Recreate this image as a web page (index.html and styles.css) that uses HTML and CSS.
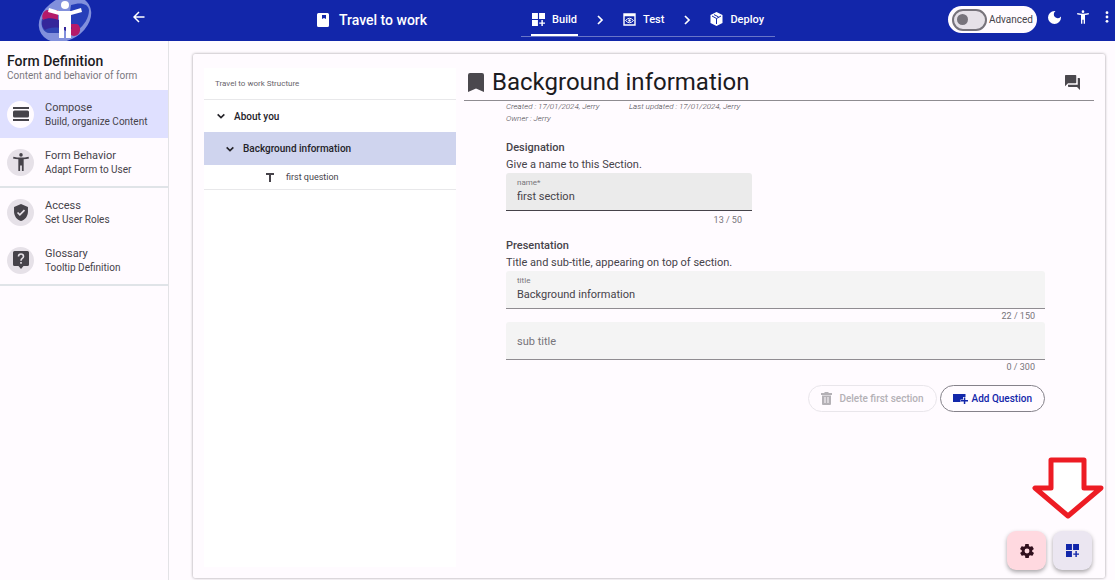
FILE: index.html
```html
<!DOCTYPE html>
<html lang="en">
<head>
<meta charset="utf-8">
<meta name="viewport" content="width=device-width, initial-scale=1">
<title>Travel to work</title>
<link rel="stylesheet" href="styles.css">
</head>
<body>
<svg class="symbols" aria-hidden="true">
  <symbol id="widgets" viewBox="3 3 18 18"><path d="M3 3h8.2v8.2H3zM12.8 3H21v8.2h-8.2zM3 12.8h8.2V21H3zM16 12.8h2V16h3v2h-3v3h-2v-3h-3v-2h3z"/></symbol>
  <symbol id="chevron" viewBox="0 0 12 12"><path d="M4 2l4 4-4 4" fill="none" stroke="currentColor" stroke-width="1.7"/></symbol>
  <symbol id="expand" viewBox="0 0 12 12"><path d="M2 4l4 4 4-4" fill="none" stroke="currentColor" stroke-width="1.9"/></symbol>
  <symbol id="person" viewBox="3 2 18 20"><path d="M20.5 6c-2.6.7-5.6 1-8.5 1s-5.900-.3-8.500-1L3 8c1.860.5 4 .83 6 1v13h2v-6h2v6h2V9c2-.17 4.140-.5 6-1zM12 6a2 2 0 1 0 0-4 2 2 0 0 0 0 4z"/></symbol>
</svg>

<header class="topbar">
  <a class="logo" href="#" aria-label="Home">
    <svg viewBox="0 0 54 42" width="54" height="42">
      <ellipse cx="27" cy="19" rx="28" ry="21" transform="rotate(-32 27 19)" fill="#8190dc"/>
      <path d="M33 5c9-3 17-2 18 5 0 8-5 15-11 20l-8-5V12z" fill="#263fb9"/>
      <path d="M4 19c6-3 14 0 18 3v11H11c-5 0-9-7-7-14z" fill="#3046b4"/>
      <path d="M9 10h11v10L5 20c-2-4 0-9 4-10z" fill="#b51b69"/>
      <path d="M30 24h9c5 2 4 12-3 12-3 0-6-3-6-7z" fill="#b51b69"/>
      <path d="M5 20c7-4 19-1 29 8l-4 4-8-4c-7-1-12 0-15 2-3-3-4-7-2-10z" fill="#35279a"/>
      <circle cx="27" cy="5" r="4" fill="#fff"/>
      <path d="M11 8l10 3h12l10-3 1 4-11 3v23h-5V27h-2v11h-5V15l-11-3z" fill="#fff"/>
    </svg>
  </a>
  <button class="icon-button back" aria-label="Back"><svg viewBox="0 0 12 12" width="12" height="12"><path d="M11.500 6H1.500M6 1L1 6l5 5" fill="none" stroke="currentColor" stroke-width="1.500"/></svg></button>
  <div class="form-name">
    <svg viewBox="0 0 12 14" width="12" height="14"><path fill-rule="evenodd" d="M1.500 0h9Q12 0 12 1.500v11Q12 14 10.500 14h-9Q0 14 0 12.500v-11Q0 0 1.500 0zM5 2v4l2-1 2 1V2z" fill="#fff"/></svg>
    <span>Travel to work</span>
  </div>
  <nav class="steps" aria-label="Steps">
    <a class="step step-active" href="#"><svg width="13" height="13"><use href="#widgets"/></svg>Build</a>
    <svg class="step-arrow" width="12" height="12"><use href="#chevron"/></svg>
    <a class="step" href="#"><svg viewBox="0 0 13 13" width="13" height="13"><path d="M1 1h11v11H1zM1 2.500h11" fill="none" stroke="currentColor" stroke-width="1.400"/><path d="M2.500 7.500q4-4.500 8 0-4 4.500-8 0z" fill="none" stroke="currentColor"/><circle cx="6.500" cy="7.500" r="1.200"/></svg>Test</a>
    <svg class="step-arrow" width="12" height="12"><use href="#chevron"/></svg>
    <a class="step" href="#"><svg viewBox="0 0 13 14" width="13" height="14"><path d="M6.500 0l6 3v8l-6 3-6-3V3z"/><path d="M2 4l4.500 2.500L11 4M6.500 6.500V12M4 2.600l4.500 2.300" fill="none" stroke="#1226aa"/></svg>Deploy</a>
  </nav>
  <div class="tools">
    <label class="advanced"><input class="switch" type="checkbox">Advanced</label>
    <button class="icon-button" aria-label="Dark mode"><svg viewBox="3 3 18 18" width="13" height="13"><path d="M12 3a9 9 0 1 0 9 9c0-.5 0-.9-.1-1.400A5.400 5.400 0 1 1 13.400 3.100C12.900 3 12.500 3 12 3z"/></svg></button>
    <button class="icon-button" aria-label="Accessibility"><svg width="12" height="14"><use href="#person"/></svg></button>
    <button class="icon-button" aria-label="More"><svg viewBox="0 0 4 12" width="4" height="12"><circle cx="2" cy="1.700" r="1.400"/><circle cx="2" cy="6" r="1.400"/><circle cx="2" cy="10.300" r="1.400"/></svg></button>
  </div>
</header>

<div class="layout">
  <aside class="sidebar">
    <div class="sidebar-head"><h2>Form Definition</h2><p>Content and behavior of form</p></div>
    <nav>
      <a class="nav-item nav-active" href="#"><span class="nav-icon"><svg viewBox="0 0 16 14" width="16" height="14"><path d="M0 0h16v2H0zM0 12h16v2H0z"/><rect y="3.500" width="16" height="7" rx="1.500"/></svg></span><span class="nav-text"><b>Compose</b><small>Build, organize Content</small></span></a>
      <a class="nav-item nav-last" href="#"><span class="nav-icon"><svg width="16" height="18"><use href="#person"/></svg></span><span class="nav-text"><b>Form Behavior</b><small>Adapt Form to User</small></span></a>
      <a class="nav-item" href="#"><span class="nav-icon"><svg viewBox="3 1 18 22" width="14" height="17"><path d="M12 1L3 5v6c0 5.550 3.840 10.740 9 12 5.160-1.260 9-6.450 9-12V5z"/><path d="M7.500 12l3 3 6-6" fill="none" stroke="#e6e1e8" stroke-width="2.200"/></svg></span><span class="nav-text"><b>Access</b><small>Set User Roles</small></span></a>
      <a class="nav-item nav-last" href="#"><span class="nav-icon"><svg viewBox="0 0 16 18" width="16" height="18"><path d="M1.500 0h13Q16 0 16 1.500v12q0 1.500-1.500 1.500h-4L8 18l-2.500-3h-4Q0 15 0 13.500v-12Q0 0 1.500 0z"/><path d="M5.500 5.500c0-3.300 5-3.300 5 0 0 2-2.500 2-2.500 4.200M8 11v1.800" fill="none" stroke="#e6e1e8" stroke-width="1.600"/></svg></span><span class="nav-text"><b>Glossary</b><small>Tooltip Definition</small></span></a>
    </nav>
  </aside>

  <main class="card">
    <section class="tree" aria-label="Structure">
      <h3 class="tree-title">Travel to work Structure</h3>
      <button class="tree-row"><svg width="10" height="10"><use href="#expand"/></svg>About you</button>
      <button class="tree-row tree-section"><svg width="10" height="10"><use href="#expand"/></svg>Background information</button>
      <button class="tree-row tree-question"><svg viewBox="0 0 8 9" width="8" height="9"><path d="M0 0h8v2H5v7H3V2H0z"/></svg>first question</button>
    </section>

    <section class="editor">
      <div class="editor-head">
        <svg viewBox="0 0 16 19" width="16" height="19"><path d="M2 0h12q2 0 2 2v17l-8-3.500L0 19V2q0-2 2-2z"/></svg>
        <h1>Background information</h1>
        <button class="icon-button comments" aria-label="Comments"><svg viewBox="2 2 20 20" width="15" height="15"><path d="M21 6h-2v9H6v2q0 1 1 1h11l4 4V7q0-1-1-1z"/><path d="M17 12V3q0-1-1-1H3Q2 2 2 3v14l4-4h10q1 0 1-1z"/></svg></button>
      </div>
      <form class="fields">
        <div class="meta"><span>Created : 17/01/2024, Jerry</span><span>Last updated : 17/01/2024, Jerry</span><span>Owner : Jerry</span></div>
        <h4>Designation</h4>
        <p>Give a name to this Section.</p>
        <div class="field field-name"><div class="box"><label for="name">name*</label><input id="name" type="text" value="first section"></div><span class="count">13 / 50</span></div>
        <h4 class="presentation">Presentation</h4>
        <p>Title and sub-title, appearing on top of section.</p>
        <div class="field"><div class="box"><label for="title">title</label><input id="title" type="text" value="Background information"></div><span class="count">22 / 150</span></div>
        <div class="field"><div class="box box-empty"><input id="subtitle" type="text" aria-label="sub title" placeholder="sub title"></div><span class="count">0 / 300</span></div>
        <div class="actions">
          <button type="button" class="pill" disabled><svg viewBox="0 0 11 13" width="11" height="13"><path fill-rule="evenodd" d="M3.500 0h4v1H11v2H0V1h3.500zM1 3.500h9V12q0 1-1 1H2q-1 0-1-1zM3.500 5v6h1V5zM6.500 5v6h1V5z"/></svg>Delete first section</button>
          <button type="button" class="pill pill-add"><svg viewBox="0 0 15 10" width="15" height="10"><path d="M0 0h12.500v3H10v2.500H7.500V8H0zM10.800 3.500h1.500V6H15v1.500h-2.700V10h-1.500V7.500H8V6h2.800z"/></svg>Add Question</button>
        </div>
      </form>
    </section>
  </main>
</div>

<div class="fabs">
  <button class="fab fab-settings" aria-label="Settings"><svg viewBox="2 2 20 20" width="14" height="14"><path d="M19.400 13c0-.3.100-.6.100-1s0-.7-.1-1l2.100-1.600c.2-.2.200-.4.100-.6l-2-3.500c-.1-.2-.4-.3-.6-.2l-2.500 1c-.5-.4-1.100-.7-1.700-1L14.500 2.400c0-.2-.2-.4-.5-.4h-4c-.3 0-.5.200-.5.400l-.4 2.700c-.6.300-1.200.6-1.700 1l-2.500-1c-.2-.1-.5 0-.6.200l-2 3.500c-.1.200-.1.500.100.600L4.600 11c0 .3-.1.700-.1 1s0 .7.100 1l-2.100 1.600c-.2.200-.2.400-.1.600l2 3.500c.1.200.4.300.6.200l2.500-1c.5.400 1.100.7 1.700 1l.4 2.700c0 .2.200.4.500.4h4c.3 0 .5-.2.500-.4l.4-2.700c.6-.3 1.200-.6 1.700-1l2.500 1c.2.100.5 0 .6-.2l2-3.500c.1-.2.100-.5-.1-.6zM12 15.500a3.500 3.500 0 1 1 0-7 3.500 3.500 0 0 1 0 7z"/></svg></button>
  <button class="fab" aria-label="Add element"><svg width="13" height="13"><use href="#widgets"/></svg></button>
</div>
<svg class="pointer" viewBox="0 0 72 64" width="72" height="64" aria-hidden="true"><path d="M19 3h33v28h17L36 59 3 31h16z" fill="#fff" stroke="#ed1c24" stroke-width="5" stroke-linejoin="round"/></svg>
</body>
</html>
```

FILE: styles.css
```css
* { box-sizing: border-box; }
body {
  margin: 0;
  min-height: 100vh;
  display: flex;
  flex-direction: column;
  background: #fffbff;
  color: #46434a;
  font-family: Roboto, "Liberation Sans", sans-serif;
  font-size: 11px;
}
h1, h2, h3, h4, p { margin: 0; }
a { color: inherit; text-decoration: none; }
button, input { font: inherit; color: inherit; }
button { cursor: pointer; }
svg { display: block; flex: none; fill: currentColor; }
.symbols { position: absolute; width: 0; height: 0; }
.icon-button { padding: 0; border: 0; background: none; }

.topbar {
  display: flex;
  height: 41px;
  background: #1226aa;
  color: #fff;
  overflow: hidden;
}
.logo { margin-left: 38px; }
.back { align-self: flex-start; margin: 11px 0 0 41px; }
.form-name {
  display: flex;
  align-items: center;
  gap: 10px;
  height: 39px;
  margin-left: 172px;
  font-size: 14px;
  font-weight: 500;
  white-space: nowrap;
}
.steps {
  display: flex;
  align-items: center;
  gap: 16px;
  height: 37px;
  margin-left: 94px;
  padding: 0 10px;
  border-bottom: 1px solid #6875c8;
  font-weight: 500;
}
.step {
  display: flex;
  align-items: center;
  gap: 7px;
  height: 36px;
  padding: 4px 1px 0;
  border-bottom: 2px solid transparent;
}
.step-active { border-color: #fff; }
.step-arrow { margin-top: 3px; }
.tools {
  display: flex;
  align-items: center;
  gap: 16px;
  height: 34px;
  margin-left: auto;
  padding-right: 6px;
}
.advanced {
  display: flex;
  align-items: center;
  gap: 2px;
  height: 27px;
  margin: 5px -5px 0 0;
  padding: 0 4px;
  border-radius: 14px;
  background: #fffbff;
  color: #46434a;
  font-size: 10px;
}
.switch {
  appearance: none;
  display: flex;
  align-items: center;
  width: 35px;
  height: 22px;
  margin: 0;
  padding: 3px;
  border: 2px solid #77737b;
  border-radius: 11px;
  background: #e6e1e8;
}
.switch::before { content: ""; width: 11px; height: 11px; border-radius: 50%; background: #77737b; }

.layout { flex: 1; display: flex; }
.sidebar { flex: none; width: 169px; border-right: 1px solid #e3e3e6; }
.sidebar-head { height: 49px; padding: 12px 7px 0; }
.sidebar h2 { color: #1c1b1f; font-size: 14px; font-weight: 500; line-height: 16px; }
.sidebar p { color: #7b787e; font-size: 10px; line-height: 13px; white-space: nowrap; }
.nav-item {
  display: flex;
  align-items: center;
  gap: 11px;
  height: 48px;
  padding-left: 7px;
}
.nav-active { background: #dfe0ff; }
.nav-last { height: 50px; border-bottom: 2px solid #e0e4e8; }
.nav-icon {
  display: grid;
  place-items: center;
  width: 27px;
  height: 27px;
  border-radius: 50%;
  background: #e6e1e8;
}
.nav-active .nav-icon { background: #fffbff; }
.nav-text { display: grid; line-height: 15px; }
.nav-text b { font-weight: 400; }
.nav-text small { font-size: 10px; line-height: 14px; }

.card {
  flex: 1;
  display: flex;
  gap: 8px;
  min-width: 0;
  margin: 13px 10px 2px 24px;
  padding: 14px 11px 11px;
  border-radius: 2px;
  box-shadow: 0 0 3px rgba(0, 0, 0, 0.4);
}
.tree { flex: none; width: 252px; background: #fff; }
.tree-title {
  height: 32px;
  padding: 0 11px;
  border-bottom: 1px solid #e8e8ea;
  color: #68656b;
  font-size: 8px;
  font-weight: 400;
  line-height: 32px;
}
.tree-row {
  display: flex;
  align-items: center;
  gap: 8px;
  width: 100%;
  height: 32px;
  padding: 0 12px;
  border: 0;
  background: none;
  color: #242329;
  font-size: 10px;
  font-weight: 500;
}
.tree-section { height: 33px; padding-left: 21px; background: #cfd4ee; }
.tree-question {
  gap: 12px;
  height: 25px;
  padding-left: 62px;
  border-bottom: 1px solid #e8e8ea;
  color: #46434a;
  font-size: 9px;
  font-weight: 400;
}

.editor { flex: 1; min-width: 0; }
.editor-head {
  display: flex;
  align-items: center;
  gap: 8px;
  height: 33px;
  padding: 0 14px 4px 4px;
  border-bottom: 1px solid #8f8c91;
  color: #4b484e;
}
h1 { color: #1c1b1f; font-size: 24px; font-weight: 400; line-height: 28px; }
.comments { margin-left: auto; }
.fields { margin: 0 49px 0 42px; }
.meta {
  display: grid;
  grid-template-columns: 123px auto;
  justify-content: start;
  font-size: 8px;
  font-style: italic;
  font-weight: 300;
  line-height: 12px;
}
.fields h4 { margin-top: 14px; font-size: 11px; font-weight: 500; line-height: 17px; }
.fields .presentation { margin-top: 11px; }
.fields p { line-height: 17px; }
.field-name { width: 246px; }
.box {
  height: 38px;
  padding: 5px 11px 0;
  border-bottom: 1px solid #8f8c91;
  border-radius: 3px 3px 0 0;
  background: #f4f4f4;
}
.field-name .box { border-color: #46434a; background: #ebebeb; }
.box label { display: block; color: #77747a; font-size: 8px; line-height: 10px; }
.box input {
  display: block;
  width: 100%;
  height: 16px;
  padding: 0;
  border: 0;
  outline: 0;
  background: none;
}
.box-empty { padding-top: 11px; }
.box input::placeholder { color: #77747a; opacity: 1; }
.count { display: block; padding: 2px 10px 0 0; color: #77747a; font-size: 9px; line-height: 11px; text-align: right; }
.field-name .count { padding-top: 3px; line-height: 12px; }
.actions { display: flex; justify-content: flex-end; gap: 3px; margin-top: 12px; }
.pill {
  display: flex;
  align-items: center;
  gap: 7px;
  height: 27px;
  padding: 0 12px;
  border: 1px solid #e9e6eb;
  border-radius: 14px;
  background: none;
  color: #b4b1b6;
  font-size: 10px;
  font-weight: 500;
}
.pill-add { gap: 4px; border-color: #85828a; color: #1226aa; }

.fabs { position: fixed; right: 23px; bottom: 10px; display: flex; gap: 7px; }
.fab {
  display: grid;
  place-items: center;
  width: 39px;
  height: 39px;
  padding: 0;
  border: 0;
  border-radius: 9px;
  background: #ebe6f1;
  box-shadow: 0 2px 4px rgba(0, 0, 0, 0.35);
  color: #1226aa;
}
.fab-settings { background: #ffd9e0; color: #31101d; }
.pointer { position: fixed; right: 11px; bottom: 59px; }
```
